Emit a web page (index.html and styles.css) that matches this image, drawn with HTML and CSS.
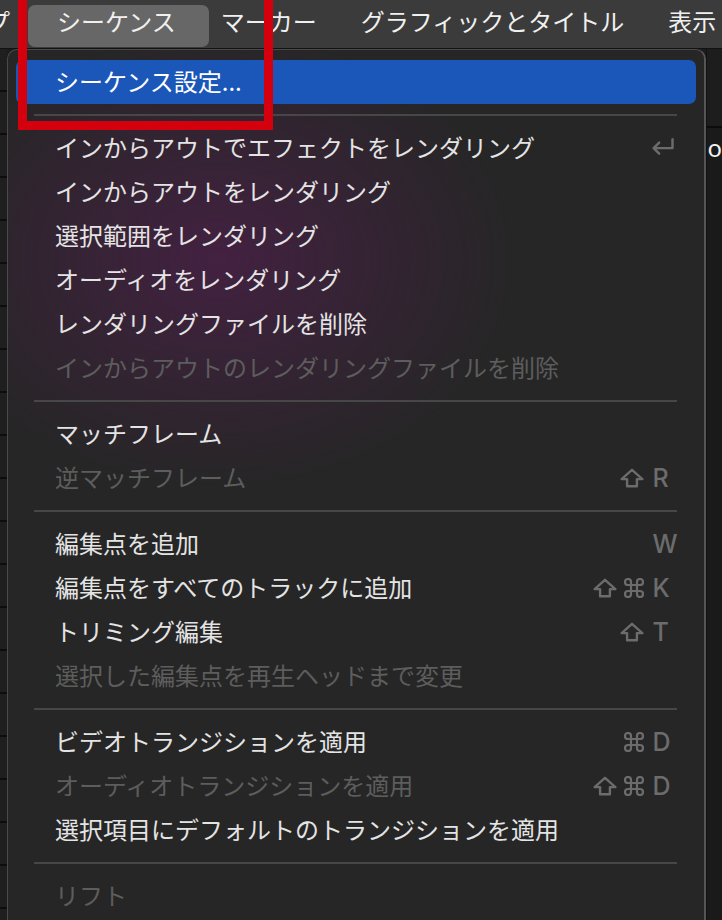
FILE: index.html
```html
<!DOCTYPE html>
<html lang="ja">
<head>
  <meta charset="UTF-8">
  <title>シーケンス メニュー</title>
  <link rel="stylesheet" href="styles.css">
</head>
<body>
  <div class="screen">
    <div class="menubar">
      <span class="mb-item mb-cut">プ</span>
      <span class="mb-item mb-active">シーケンス</span>
      <span class="mb-item mb-next">マーカー</span>
      <span class="mb-item">グラフィックとタイトル</span>
      <span class="mb-item">表示</span>
    </div>

    <div class="stage">
      <div class="side-left"></div>

      <div class="panel">
        <div class="item selected"><span class="label">シーケンス設定...</span></div>
        <div class="sep"></div>

        <div class="item">
          <span class="label">インからアウトでエフェクトをレンダリング</span>
          <span class="keys"><span class="key">
            <svg class="ret" viewBox="0 0 24 18"><path d="M21 2 V10 H4 M9 5 L4 10 L9 15"/></svg>
          </span></span>
        </div>
        <div class="item"><span class="label">インからアウトをレンダリング</span></div>
        <div class="item"><span class="label">選択範囲をレンダリング</span></div>
        <div class="item"><span class="label">オーディオをレンダリング</span></div>
        <div class="item"><span class="label">レンダリングファイルを削除</span></div>
        <div class="item off"><span class="label">インからアウトのレンダリングファイルを削除</span></div>
        <div class="sep"></div>

        <div class="item"><span class="label">マッチフレーム</span></div>
        <div class="item off">
          <span class="label">逆マッチフレーム</span>
          <span class="keys">
            <span class="mods"><svg class="shift" viewBox="0 0 22 18"><path d="M11 1.5 L20.5 10 H15.5 V16.5 H6.5 V10 H1.5 Z"/></svg></span>
            <span class="key">R</span>
          </span>
        </div>
        <div class="sep"></div>

        <div class="item">
          <span class="label">編集点を追加</span>
          <span class="keys"><span class="key">W</span></span>
        </div>
        <div class="item">
          <span class="label">編集点をすべてのトラックに追加</span>
          <span class="keys">
            <span class="mods">
              <svg class="shift" viewBox="0 0 22 18"><path d="M11 1.5 L20.5 10 H15.5 V16.5 H6.5 V10 H1.5 Z"/></svg>
              <svg class="cmd" viewBox="0 0 20 20"><path d="M7 7 V4 A3 3 0 1 0 4 7 H16 A3 3 0 1 0 13 4 V16 A3 3 0 1 0 16 13 H4 A3 3 0 1 0 7 16 Z"/></svg>
            </span>
            <span class="key">K</span>
          </span>
        </div>
        <div class="item">
          <span class="label">トリミング編集</span>
          <span class="keys">
            <span class="mods"><svg class="shift" viewBox="0 0 22 18"><path d="M11 1.5 L20.5 10 H15.5 V16.5 H6.5 V10 H1.5 Z"/></svg></span>
            <span class="key">T</span>
          </span>
        </div>
        <div class="item off"><span class="label">選択した編集点を再生ヘッドまで変更</span></div>
        <div class="sep"></div>

        <div class="item">
          <span class="label">ビデオトランジションを適用</span>
          <span class="keys">
            <span class="mods"><svg class="cmd" viewBox="0 0 20 20"><path d="M7 7 V4 A3 3 0 1 0 4 7 H16 A3 3 0 1 0 13 4 V16 A3 3 0 1 0 16 13 H4 A3 3 0 1 0 7 16 Z"/></svg></span>
            <span class="key">D</span>
          </span>
        </div>
        <div class="item off">
          <span class="label">オーディオトランジションを適用</span>
          <span class="keys">
            <span class="mods">
              <svg class="shift" viewBox="0 0 22 18"><path d="M11 1.5 L20.5 10 H15.5 V16.5 H6.5 V10 H1.5 Z"/></svg>
              <svg class="cmd" viewBox="0 0 20 20"><path d="M7 7 V4 A3 3 0 1 0 4 7 H16 A3 3 0 1 0 13 4 V16 A3 3 0 1 0 16 13 H4 A3 3 0 1 0 7 16 Z"/></svg>
            </span>
            <span class="key">D</span>
          </span>
        </div>
        <div class="item"><span class="label">選択項目にデフォルトのトランジションを適用</span></div>
        <div class="sep"></div>

        <div class="item off"><span class="label">リフト</span></div>
      </div>

      <div class="side-right"><span class="peek">o</span></div>
    </div>

    <!-- annotation frame around the menu title -->
    <div class="callout"></div>
  </div>
</body>
</html>
```

FILE: styles.css
```css
html, body {
  margin: 0;
  padding: 0;
  background: #1c1c1c;
}
body {
  width: 722px;
  height: 920px;
  overflow: hidden;
  font-family: "Noto Sans CJK JP", "Noto Sans", sans-serif;
  color: #e4e4e4;
}
.screen {
  position: relative;
  display: flex;
  flex-direction: column;
  height: 920px;
}

/* top menu bar */
.menubar {
  display: flex;
  align-items: flex-start;
  box-sizing: border-box;
  height: 49px;
  padding-top: 5px;
  background: #3b3b3b;
  border-bottom: 1px solid #121212;
  font-size: 24px;
  color: #f0f0f0;
  white-space: nowrap;
}
.mb-item {
  padding: 0 22px 10px;
  line-height: 32px;
}
.mb-cut {
  margin-left: -36px;
}
.mb-active {
  margin-left: -4px;
  padding: 0 33px 10px 29px;
  background: #676767;
  border-radius: 7px;
}
.mb-next {
  margin-left: -10px;
}

/* area under the bar */
.stage {
  display: flex;
  flex: 1;
}
.side-left {
  width: 7px;
  background: #1f1f1f repeating-linear-gradient(180deg, transparent 0 41px, #0d0d0d 41px 43px);
}
.side-right {
  flex: 1;
  background: #1a1a1a;
  border-left: 1px solid #111;
  padding-top: 83px;
  box-shadow: inset 0 77px 0 #1d1d1d, inset 0 79px 0 #0c0c0c;
}
.peek {
  display: block;
  font-family: "Noto Sans", sans-serif;
  font-size: 24px;
  line-height: 32px;
  color: #f2f2f2;
}

/* dropdown panel */
.panel {
  width: 699px;
  padding-top: 10px;
  border: 1px solid #4a4a4a;
  border-right: 2px solid #555;
  border-bottom: none;
  border-radius: 10px 10px 0 0;
  background:
    radial-gradient(ellipse 300px 230px at 210px 210px, rgba(72, 32, 70, 0.85), rgba(72, 32, 70, 0) 100%),
    #262626;
}
.item {
  display: flex;
  align-items: center;
  height: 44px;
  margin: 0 8px;
  padding: 0 18px 0 39px;
  font-size: 24px;
  white-space: nowrap;
}
.item.selected {
  background: #1b56b9;
  border-radius: 7px;
  color: #fff;
}
.item.off {
  color: #5d5d5d;
}
.label {
  flex: 1;
  padding-bottom: 4px;
}
.keys {
  display: flex;
  align-items: center;
  color: #6c6c6c;
}
.mods {
  display: flex;
  align-items: center;
  gap: 7px;
  margin-right: 8px;
}
.key {
  display: flex;
  align-items: center;
  width: 26px;
  font-family: Inter, "Noto Sans", sans-serif;
  font-size: 25px;
  font-weight: 500;
}
.shift {
  width: 24px;
  height: 20px;
}
.cmd {
  width: 20px;
  height: 20px;
}
.ret {
  width: 27px;
  height: 20px;
  margin: 0 0 3px -3px;
}
.keys svg path {
  fill: none;
  stroke: #6c6c6c;
  stroke-width: 2.2;
  stroke-linejoin: round;
  stroke-linecap: round;
}
.cmd path {
  stroke-width: 2;
}
.sep {
  height: 2px;
  margin: 10px 27px 10px 26px;
  background: #474747;
}

/* red highlight frame drawn on the screenshot */
.callout {
  position: absolute;
  left: 18px;
  top: -12px;
  width: 237px;
  height: 124px;
  border: 9px solid #d4000d;
}
```
